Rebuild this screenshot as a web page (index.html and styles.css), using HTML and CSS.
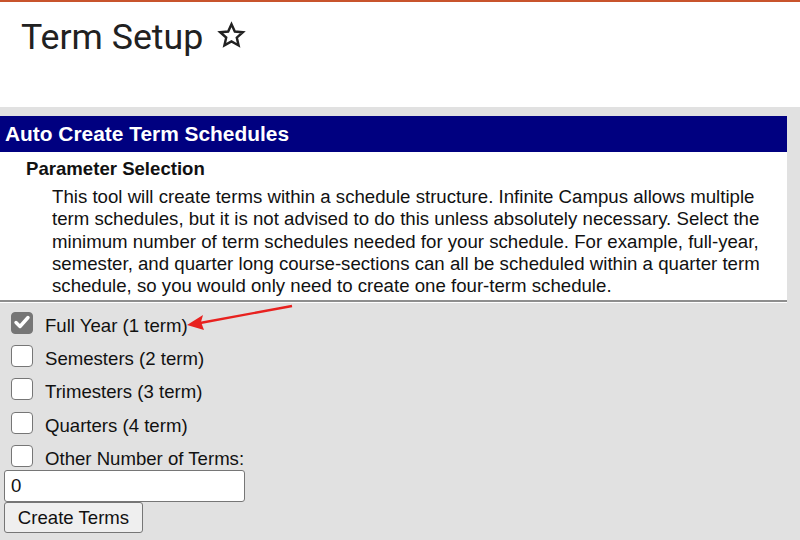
FILE: index.html
```html
<!DOCTYPE html>
<html>
<head>
<meta charset="utf-8">
<link rel="stylesheet" href="styles.css">
</head>
<body>
<header class="top">
  <h1 class="page-title">Term Setup
    <svg class="star" viewBox="0 0 24 24" width="29" height="29"><path d="M12 2.6l2.75 6.1 6.65.62-5.02 4.4 1.48 6.5L12 16.85 6.14 20.2l1.48-6.5L2.6 9.32l6.65-.62z" fill="none" stroke="#212121" stroke-width="2" stroke-linejoin="miter"/></svg>
  </h1>
</header>
<div class="spacer"></div>
<section class="panel">
  <div class="panel-title">Auto Create Term Schedules</div>
  <div class="panel-body">
    <div class="sub-title">Parameter Selection</div>
    <p class="desc">This tool will create terms within a schedule structure. Infinite Campus allows multiple term schedules, but it is not advised to do this unless absolutely necessary. Select the minimum number of term schedules needed for your schedule. For example, full-year, semester, and quarter long course-sections can all be scheduled within a quarter term schedule, so you would only need to create one four-term schedule.</p>
  </div>
</section>
<div class="options">
  <label class="opt"><span class="cb checked"><svg viewBox="0 0 22 22" width="22" height="22"><path d="M5 11.5l4 4 8-9" fill="none" stroke="#fff" stroke-width="3.4" stroke-linecap="round" stroke-linejoin="round"/></svg></span><span class="lbl">Full Year (1 term)</span></label>
  <label class="opt"><span class="cb"></span><span class="lbl">Semesters (2 term)</span></label>
  <label class="opt"><span class="cb"></span><span class="lbl">Trimesters (3 term)</span></label>
  <label class="opt"><span class="cb"></span><span class="lbl">Quarters (4 term)</span></label>
  <label class="opt"><span class="cb"></span><span class="lbl">Other Number of Terms:</span></label>
  <div class="field">0</div>
  <div class="btn">Create Terms</div>
</div>
<svg class="arrow" width="120" height="40" viewBox="0 0 120 40"><path d="M110 3 L18 20" stroke="#e8211f" stroke-width="2.4" fill="none"/><path d="M5 22 L21 12 L19 19 L22 27 Z" fill="#e8211f"/></svg>
</body>
</html>
```
FILE: styles.css
```css
html, body { margin: 0; padding: 0; }
body {
  background: #e1e1e1;
  font-family: "Liberation Sans", Arial, sans-serif;
  color: #111;
  width: 800px;
  height: 540px;
  overflow: hidden;
  position: relative;
}
.top {
  background: #fff;
  border-top: 2px solid #c8542c;
  height: 107px;
  box-sizing: border-box;
}
.page-title {
  margin: 0;
  padding: 14px 0 0 21px;
  font-family: Roboto, "Noto Sans", sans-serif;
  font-weight: 400;
  font-size: 35.7px;
  line-height: 42px;
  color: #212121;
  display: flex;
  align-items: center;
  gap: 14px;
}
.star { display: block; margin-top: -3px; }
.spacer { height: 9px; }
.panel {
  width: 787px;
  background: #fff;
  border-bottom: 2px solid #8e8e8e;
  box-shadow: 0 1px 0 #fff;
}
.panel-title {
  background: #000080;
  color: #fff;
  font-weight: 700;
  font-size: 20.9px;
  height: 36px;
  line-height: 36px;
  padding-left: 5px;
}
.panel-body { padding: 5px 0 3px 0; }
.sub-title {
  font-weight: 700;
  font-size: 18.6px;
  line-height: 24px;
  padding-left: 26px;
  color: #111;
  margin-bottom: 5px;
}
.desc {
  margin: 0;
  padding: 0 20px 0 52px;
  font-size: 18.65px;
  line-height: 22.25px;
  color: #111;
}
.options {
  padding: 7px 0 0 4px;
}
.opt {
  display: flex;
  align-items: center;
  height: 33.3px;
}
.cb {
  box-sizing: border-box;
  width: 22px;
  height: 22px;
  margin-left: 7px;
  margin-top: -6px;
  border: 1.5px solid #767676;
  border-radius: 4px;
  background: #fff;
  display: block;
}
.cb.checked {
  background: #767676;
  border-color: #767676;
}
.cb.checked svg { display: block; margin: -1.5px; }
.lbl {
  margin-left: 12px;
  font-size: 18.6px;
  color: #111;
}
.field {
  box-sizing: border-box;
  width: 241px;
  height: 32px;
  background: #fff;
  border: 1px solid #767676;
  border-radius: 3px;
  font-size: 18.6px;
  line-height: 30px;
  padding-left: 6px;
  margin-top: -6px;
}
.btn {
  box-sizing: border-box;
  width: 139px;
  height: 31px;
  background: #efefef;
  border: 1px solid #767676;
  border-radius: 3px;
  font-size: 18.6px;
  line-height: 29px;
  text-align: center;
}
.arrow {
  position: absolute;
  left: 182px;
  top: 303px;
}
```
